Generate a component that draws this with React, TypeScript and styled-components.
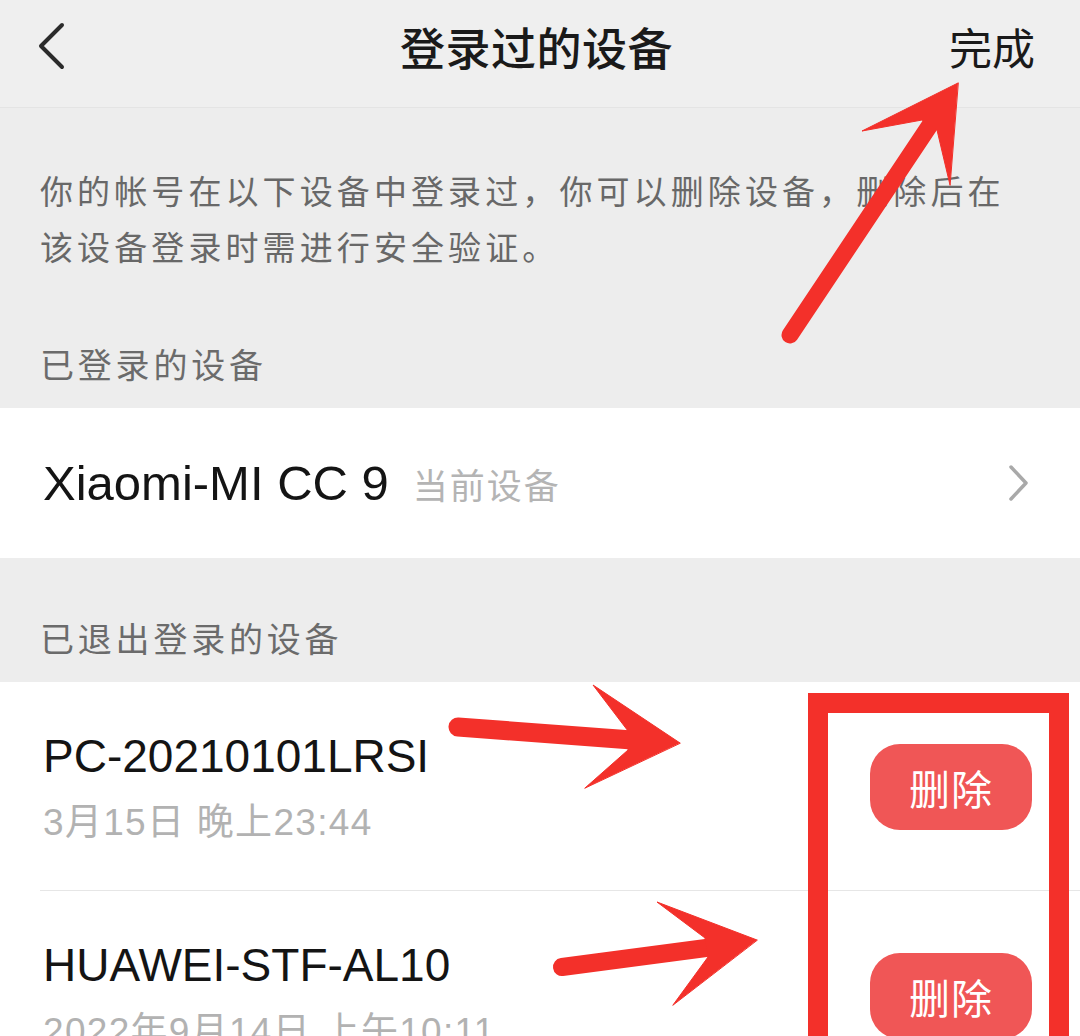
import React from "react";
import styled, { createGlobalStyle } from "styled-components";

const GlobalStyle = createGlobalStyle`
  html, body {
    margin: 0;
    padding: 0;
    background: #ededed;
  }
`;

const cjk = `"Noto Sans CJK SC", "Noto Sans", sans-serif`;
const latin = `"Liberation Sans", "Noto Sans CJK SC", sans-serif`;
const markRed = "#f3302a";

const Page = styled.div`
  position: relative;
  width: 1080px;
  height: 1036px;
  overflow: hidden;
  background: #ededed;
  font-family: ${cjk};
`;

const Header = styled.header`
  display: grid;
  grid-template-columns: 1fr auto 1fr;
  align-items: center;
  height: 92px;
  padding: 0 45px 15px 38px;
  background: #efefef;
  border-bottom: 1px solid #e4e4e4;
`;

const BackButton = styled.button`
  justify-self: start;
  display: flex;
  padding: 0;
  border: 0;
  background: none;
  color: #2b2b2b;
`;

const Title = styled.h1`
  margin: 0;
  font-size: 45px;
  font-weight: 500;
  color: #1a1a1a;
  letter-spacing: 0.5px;
`;

const DoneButton = styled.button`
  justify-self: end;
  padding: 0;
  border: 0;
  background: none;
  font-family: ${cjk};
  font-size: 43px;
  color: #1a1a1a;
`;

const Intro = styled.p`
  margin: 0;
  padding: 54px 56px 10px 40px;
  font-size: 33px;
  line-height: 56px;
  letter-spacing: 4.1px;
  color: #686868;
`;

const SectionLabel = styled.div`
  padding: 54px 40px 18px;
  font-size: 34px;
  line-height: 52px;
  letter-spacing: 3.8px;
  color: #6b6b6b;
`;

const CurrentRow = styled.div`
  display: flex;
  align-items: center;
  height: 150px;
  padding: 0 50px 0 43px;
  background: #fff;
`;

const DeviceName = styled.span<{ $size?: number }>`
  font-family: ${latin};
  font-size: ${(p) => p.$size ?? 47}px;
  line-height: 60px;
  color: #141414;
`;

const CurrentTag = styled.span`
  margin-left: 24px;
  font-size: 35px;
  letter-spacing: 2px;
  color: #b4b4b4;
`;

const Chevron = styled.svg`
  margin-left: auto;
  color: #a9a9a9;
`;

const List = styled.div`
  padding-left: 40px;
  background: #fff;
`;

const Item = styled.div<{ $last?: boolean }>`
  display: flex;
  align-items: center;
  padding: 44px 48px 42px 0;
  border-bottom: ${(p) => (p.$last ? "0" : "1px solid #e6e6e6")};
`;

const ItemText = styled.div`
  display: flex;
  flex-direction: column;
  gap: 12px;
  padding-left: 3px;
`;

const ItemTime = styled.span`
  font-family: ${latin};
  font-size: 37px;
  line-height: 50px;
  letter-spacing: 1.3px;
  color: #b2b2b2;
`;

const DeleteButton = styled.button`
  margin-left: auto;
  width: 162px;
  height: 86px;
  border: 0;
  border-radius: 30px;
  background: #f05656;
  font-family: ${cjk};
  font-size: 41px;
  letter-spacing: 1px;
  color: #fff;
`;

const Marks = styled.svg`
  position: absolute;
  top: 0;
  left: 0;
  pointer-events: none;
`;

const loggedOut = [
  { name: "PC-20210101LRSI", time: "3月15日 晚上23:44" },
  { name: "HUAWEI-STF-AL10", time: "2022年9月14日 上午10:11" },
];

export default function App() {
  return (
    <>
      <GlobalStyle />
      <Page>
        <Header>
          <BackButton aria-label="返回">
            <svg width="28" height="48" viewBox="0 0 28 48" fill="none">
              <path
                d="M24 3 L3 24 L24 45"
                stroke="currentColor"
                strokeWidth="4"
                strokeLinecap="round"
                strokeLinejoin="round"
              />
            </svg>
          </BackButton>
          <Title>登录过的设备</Title>
          <DoneButton>完成</DoneButton>
        </Header>

        <Intro>
          你的帐号在以下设备中登录过，你可以删除设备，删除后在该设备登录时需进行安全验证。
        </Intro>

        <SectionLabel>已登录的设备</SectionLabel>
        <CurrentRow>
          <DeviceName $size={49}>Xiaomi-MI CC 9</DeviceName>
          <CurrentTag>当前设备</CurrentTag>
          <Chevron width="22" height="38" viewBox="0 0 22 38" fill="none">
            <path
              d="M3 3 L18 19 L3 35"
              stroke="currentColor"
              strokeWidth="3.5"
              strokeLinecap="round"
              strokeLinejoin="round"
            />
          </Chevron>
        </CurrentRow>

        <SectionLabel>已退出登录的设备</SectionLabel>
        <List>
          {loggedOut.map((d, i) => (
            <Item key={d.name} $last={i === loggedOut.length - 1}>
              <ItemText>
                <DeviceName $size={46}>{d.name}</DeviceName>
                <ItemTime>{d.time}</ItemTime>
              </ItemText>
              <DeleteButton>删除</DeleteButton>
            </Item>
          ))}
        </List>

        {/* red annotations drawn over the screenshot */}
        <Marks width="1080" height="1036" viewBox="0 0 1080 1036">
          <g fill={markRed} stroke={markRed} strokeLinecap="round" strokeLinejoin="round">
            <line x1="790" y1="335" x2="930" y2="125" strokeWidth="17" />
            <polygon points="958,83 862,131 922,120 937,130 950,185" strokeWidth="1" />

            <line x1="458" y1="727" x2="632" y2="740" strokeWidth="19" />
            <polygon points="680,743 593,685 628,731 628,750 585,788" strokeWidth="1" />

            <line x1="562" y1="967" x2="706" y2="948" strokeWidth="18" />
            <polygon points="757,940 657,902 705,938 708,957 673,1005" strokeWidth="1" />
          </g>
          <rect
            x="818"
            y="703"
            width="241"
            height="500"
            fill="none"
            stroke={markRed}
            strokeWidth="20"
          />
        </Marks>
      </Page>
    </>
  );
}
